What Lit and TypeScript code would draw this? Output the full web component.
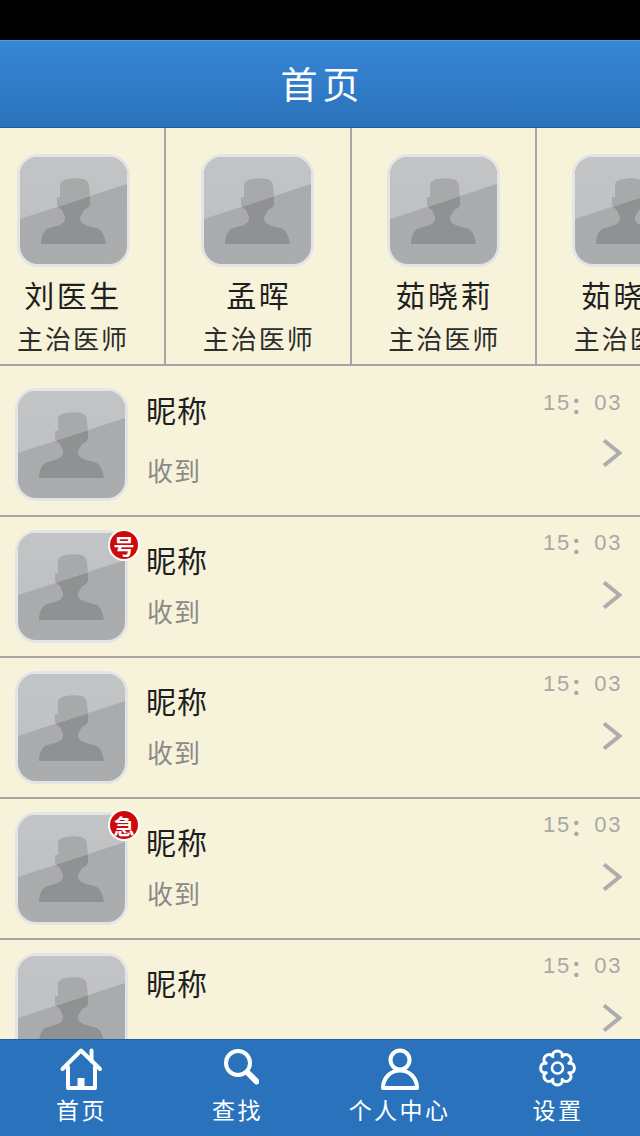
import { LitElement, html, css, svg } from 'lit';
import { customElement, property } from 'lit/decorators.js';

@customElement('face-tile')
export class FaceTile extends LitElement {
  static styles = css`
    :host {
      display: block;
      width: 113px;
      height: 113px;
    }
    svg {
      display: block;
    }
  `;

  render() {
    const bust =
      'M24 90 C24 83 26 78 30 75 C34 73 44 72 47 68 C48 66 48 65 48 63 L45 56 C43 55 41 53 40 51 L40 43 L43 43 L43 30 C44 27 48 25 52 25 C56 24 62 24 66 25 C70 26 72 29 72 33 L73 44 L73 51 C72 53 70 55 67 56 L63 63 C63 65 63 66 64 68 C67 72 77 73 82 75 C86 78 88 83 89 90 Z';
    return html`<svg width="113" height="113" viewBox="0 0 113 113">
      <defs>
        <clipPath id="tile"><rect x="3" y="3" width="107" height="107" rx="18" /></clipPath>
        <clipPath id="upper"><path d="M0 0H113V29L0 66Z" /></clipPath>
        <linearGradient id="top" x1="0" y1="0" x2="0" y2="1">
          <stop offset="0" stop-color="#c3c4c5" />
          <stop offset="1" stop-color="#bdbebf" />
        </linearGradient>
        <linearGradient id="bottom" x1="0" y1="0" x2="0" y2="1">
          <stop offset="0" stop-color="#a9aaab" />
          <stop offset="1" stop-color="#abacae" />
        </linearGradient>
      </defs>
      <rect x="1.5" y="1.5" width="110" height="110" rx="20" fill="#e3e4e6" stroke="#e3e4e6" stroke-width="3" />
      <g clip-path="url(#tile)">
        <rect width="113" height="113" fill="url(#bottom)" />
        <path d=${bust} fill="#909192" />
        <g clip-path="url(#upper)">
          <rect width="113" height="113" fill="url(#top)" />
          <path d=${bust} fill="#a8a9aa" />
        </g>
      </g>
    </svg>`;
  }
}

const gearPath = (() => {
  // eight scalloped lobes, one pointing straight up
  const pt = (r: number, deg: number) => {
    const a = (deg * Math.PI) / 180;
    return `${(21.5 + r * Math.cos(a)).toFixed(2)} ${(21 + r * Math.sin(a)).toFixed(2)}`;
  };
  let d = `M${pt(12.2, -112.5)} `;
  for (let i = 0; i < 8; i++) {
    const v = -112.5 + i * 45;
    d += `C${pt(19.9, v + 3)} ${pt(19.9, v + 42)} ${pt(12.2, v + 45)} `;
  }
  return d + 'Z';
})();

const tabIcons = {
  home: svg`<path d="M3.5 22 L22 3.5 L41 22" /><path d="M32.5 3.5 V14" /><path d="M9 20 V41 H36 V20" /><path d="M22 41 V31" stroke-width="7" stroke-linecap="butt" />`,
  search: svg`<circle cx="23" cy="16" r="12" /><path d="M33.5 26.5 L41.5 34.5" stroke-width="6" />`,
  person: svg`<circle cx="23" cy="13" r="9.5" /><path d="M6 41 H40 C40 31 32.5 23.5 23 23.5 C13.5 23.5 6 31 6 41 Z" />`,
  gear: svg`<path d=${gearPath} stroke-width="3" /><circle cx="21.5" cy="21" r="5.5" stroke-width="2.6" />`,
};

@customElement('app-root')
export class AppRoot extends LitElement {
  @property({ type: Array }) doctors = [
    { name: '刘医生', title: '主治医师' },
    { name: '孟晖', title: '主治医师' },
    { name: '茹晓莉', title: '主治医师' },
    { name: '茹晓莉', title: '主治医师' },
  ];

  @property({ type: Array }) chats = [
    { badge: '', badgeTop: 0, msg: '收到' },
    { badge: '号', badgeTop: -1, msg: '收到' },
    { badge: '', badgeTop: 0, msg: '收到' },
    { badge: '急', badgeTop: -3, msg: '收到' },
    { badge: '', badgeTop: 0, msg: '' },
  ];

  @property({ type: Array }) tabs: { label: string; icon: keyof typeof tabIcons }[] = [
    { label: '首页', icon: 'home' },
    { label: '查找', icon: 'search' },
    { label: '个人中心', icon: 'person' },
    { label: '设置', icon: 'gear' },
  ];

  static styles = css`
    :host {
      display: flex;
      flex-direction: column;
      width: 640px;
      height: 1136px;
      overflow: hidden;
      background: #f7f3da;
      font-family: 'Noto Sans CJK SC', 'Liberation Sans', sans-serif;
    }
    .status {
      flex: none;
      height: 40px;
      background: #000;
    }
    .head {
      flex: none;
      height: 88px;
      box-sizing: border-box;
      padding-bottom: 2px;
      display: flex;
      align-items: center;
      justify-content: center;
      background: linear-gradient(#3687d6, #2b72ba);
      border-top: 1px solid #4c9be0;
      border-bottom: 1px solid #1c5f9f;
      color: #fff;
      font-size: 37px;
      letter-spacing: 5px;
      text-indent: 5px;
    }
    .docs {
      flex: none;
      display: flex;
      height: 238px;
      box-sizing: border-box;
      border-bottom: 2px solid #a6a6a4;
      overflow: hidden;
    }
    .doc {
      flex: 0 0 185.5px;
      box-sizing: border-box;
      border-right: 2px solid #a6a6a4;
      padding-top: 26px;
      display: flex;
      flex-direction: column;
      align-items: center;
    }
    .doc:first-child {
      flex-basis: 166px;
      padding-right: 20px;
    }
    .doc:first-child face-tile {
      margin-left: 3px;
    }
    .doc-name {
      margin-top: 7px;
      font-size: 30px;
      line-height: 40px;
      letter-spacing: 2.5px;
      text-indent: 2px;
      color: #1f1f1f;
      white-space: nowrap;
    }
    .doc-title {
      margin-top: 4px;
      font-size: 26px;
      line-height: 40px;
      letter-spacing: 2px;
      text-indent: 2px;
      color: #2c2c2c;
      white-space: nowrap;
    }
    .list {
      flex: 1;
      min-height: 0;
      overflow: hidden;
    }
    .row {
      display: flex;
      height: 141px;
      box-sizing: border-box;
      padding: 12px 18px 0 15px;
      border-bottom: 2px solid #a6a6a4;
    }
    .row.first {
      height: 151px;
      padding-top: 22px;
    }
    .pic {
      position: relative;
      flex: none;
      margin-top: 1px;
      align-self: flex-start;
    }
    .first .pic {
      margin-top: 0;
    }
    .badge {
      position: absolute;
      right: -12px;
      width: 28px;
      height: 28px;
      border: 2px solid #fff;
      border-radius: 50%;
      background: #cc0a0a;
      color: #fff;
      font-size: 21px;
      font-weight: 700;
      line-height: 28px;
      text-align: center;
    }
    .body {
      flex: 1;
      margin: 12px 0 0 18px;
    }
    .first .body {
      margin-top: 3px;
    }
    .nick {
      font-size: 30px;
      line-height: 36px;
      letter-spacing: 1px;
      color: #1f1f1f;
    }
    .msg {
      margin: 18px 0 0 1px;
      font-size: 26px;
      line-height: 32px;
      letter-spacing: 1px;
      color: #8a8a88;
    }
    .first .msg {
      margin-top: 27px;
    }
    .side {
      display: flex;
      flex-direction: column;
      align-items: flex-end;
      margin-top: 1px;
    }
    .first .side {
      margin-top: 2px;
    }
    .time {
      font-family: 'Liberation Sans', 'Noto Sans CJK SC', sans-serif;
      font-size: 22px;
      line-height: 26px;
      letter-spacing: 1.6px;
      color: #a8a8a6;
      white-space: pre;
    }
    .time b {
      font-weight: 700;
      vertical-align: -3px;
      line-height: 0;
    }
    .go {
      display: block;
      margin-top: 25px;
    }
    .first .go {
      margin-top: 23px;
    }
    .tabs {
      flex: none;
      display: grid;
      grid-template-columns: 162px 150px 174px 143px;
      height: 97px;
      box-sizing: border-box;
      border-top: 1px solid #1c5f9f;
      background: #2a73bc;
    }
    .tab {
      display: flex;
      flex-direction: column;
      align-items: center;
      padding-top: 7px;
      color: #fff;
    }
    .tab svg {
      display: block;
      fill: none;
      stroke: #fff;
      stroke-width: 4;
      stroke-linecap: round;
      stroke-linejoin: round;
    }
    .tab span {
      margin-top: 2px;
      font-size: 23px;
      line-height: 32px;
      letter-spacing: 2.4px;
      text-indent: 1px;
      white-space: nowrap;
    }
  `;

  render() {
    return html`
      <div class="status"></div>
      <div class="head">首页</div>
      <div class="docs">
        ${this.doctors.map(
          (d) => html`<div class="doc">
            <face-tile></face-tile>
            <div class="doc-name">${d.name}</div>
            <div class="doc-title">${d.title}</div>
          </div>`,
        )}
      </div>
      <div class="list">
        ${this.chats.map(
          (c, i) => html`<div class="row ${i === 0 ? 'first' : ''}">
            <div class="pic">
              <face-tile></face-tile>
              ${c.badge ? html`<div class="badge" style="top:${c.badgeTop}px">${c.badge}</div>` : ''}
            </div>
            <div class="body">
              <div class="nick">昵称</div>
              ${c.msg ? html`<div class="msg">${c.msg}</div>` : ''}
            </div>
            <div class="side">
              <div class="time">15<b>：</b>03</div>
              <svg class="go" width="20" height="28" viewBox="0 0 20 28" fill="none" stroke="#aeadab" stroke-width="4">
                <path d="M2 1.5 L17.5 14 L2 26.5" />
              </svg>
            </div>
          </div>`,
        )}
      </div>
      <div class="tabs">
        ${this.tabs.map(
          (t) => html`<div class="tab">
            <svg width="44" height="44" viewBox="0 0 44 44">${tabIcons[t.icon]}</svg>
            <span>${t.label}</span>
          </div>`,
        )}
      </div>
    `;
  }
}
